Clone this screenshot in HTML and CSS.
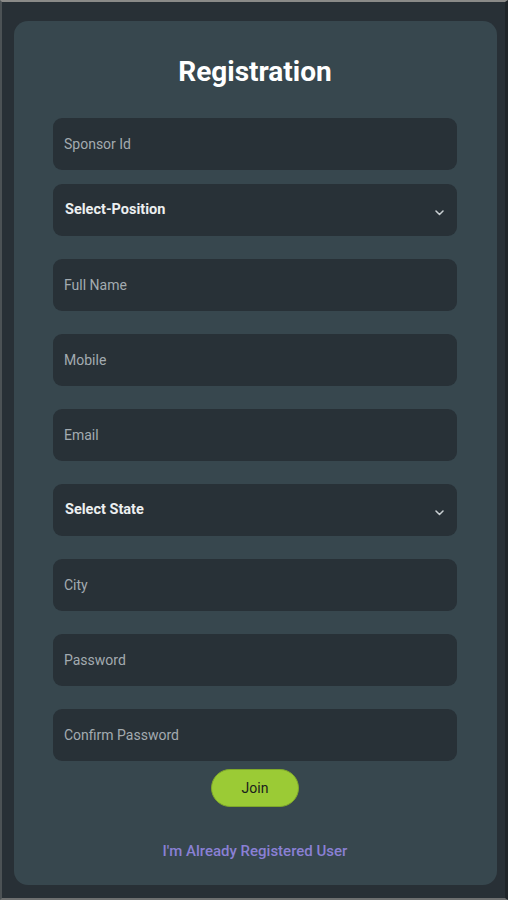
FILE: index.html
```html
<!DOCTYPE html>
<html>
<head>
<meta charset="utf-8">
<link rel="stylesheet" href="styles.css">
</head>
<body>
<div class="frame">
  <div class="card">
    <h1 class="title">Registration</h1>
    <div class="fields">
      <div class="field"><span class="ph">Sponsor Id</span></div>
      <div class="field select first-gap"><span class="sel">Select-Position</span>
        <svg class="chev" width="9" height="6" viewBox="0 0 9 6"><path d="M1 1l3.5 3.5 3.5-3.5" fill="none" stroke="#c9cfd2" stroke-width="1.5" stroke-linecap="round" stroke-linejoin="round"/></svg>
      </div>
      <div class="field"><span class="ph">Full Name</span></div>
      <div class="field"><span class="ph">Mobile</span></div>
      <div class="field"><span class="ph">Email</span></div>
      <div class="field select"><span class="sel">Select State</span>
        <svg class="chev" width="9" height="6" viewBox="0 0 9 6"><path d="M1 1l3.5 3.5 3.5-3.5" fill="none" stroke="#c9cfd2" stroke-width="1.5" stroke-linecap="round" stroke-linejoin="round"/></svg>
      </div>
      <div class="field"><span class="ph">City</span></div>
      <div class="field"><span class="ph">Password</span></div>
      <div class="field"><span class="ph">Confirm Password</span></div>
    </div>
    <div class="actions">
      <button class="join">Join</button>
      <a class="link">I'm Already Registered User</a>
    </div>
  </div>
</div>
</body>
</html>
```
FILE: styles.css
```css
html, body {
  margin: 0;
  padding: 0;
  background: #283036;
  font-family: Roboto, "Liberation Sans", sans-serif;
}
.frame {
  box-sizing: border-box;
  width: 508px;
  height: 900px;
  border-top: 2px solid #8a8a88;
  border-left: 2px solid #4c5255;
  border-right: 3px solid #1f2529;
  border-bottom: 2px solid #6e7070;
  padding: 19px 8px 0 12px;
  background: #283036;
}
.card {
  box-sizing: border-box;
  height: 864px;
  background: #37474e;
  border-radius: 14px;
  padding: 35px 40px 0 39px;
}
.title {
  margin: 0;
  height: 32px;
  line-height: 32px;
  text-align: center;
  color: #ffffff;
  font-size: 28px;
  font-weight: 700;
}
.fields {
  margin-top: 30px;
  display: flex;
  flex-direction: column;
  gap: 23px;
}
.field {
  height: 52px;
  background: #283137;
  border-radius: 9px;
  display: flex;
  align-items: center;
  padding: 0 11px;
  position: relative;
}
.first-gap {
  margin-top: -9px;
}
.ph {
  color: #a3abb0;
  font-size: 14px;
}
.sel {
  color: #eceff0;
  font-size: 14.5px;
  font-weight: 700;
  padding-left: 1px;
  margin-top: -2px;
}
.chev {
  position: absolute;
  right: 13px;
  top: 26px;
}
.actions {
  display: flex;
  flex-direction: column;
  align-items: center;
}
.join {
  margin-top: 8px;
  width: 88px;
  height: 38px;
  border-radius: 19px;
  border: 1px solid #7fa82a;
  background: #9bcb35;
  color: #1a201c;
  font-family: Roboto, "Liberation Sans", sans-serif;
  font-size: 14px;
  font-weight: 400;
}
.link {
  margin-top: 34px;
  color: #8a80d4;
  font-size: 15px;
  font-weight: 500;
  line-height: 20px;
}
```
